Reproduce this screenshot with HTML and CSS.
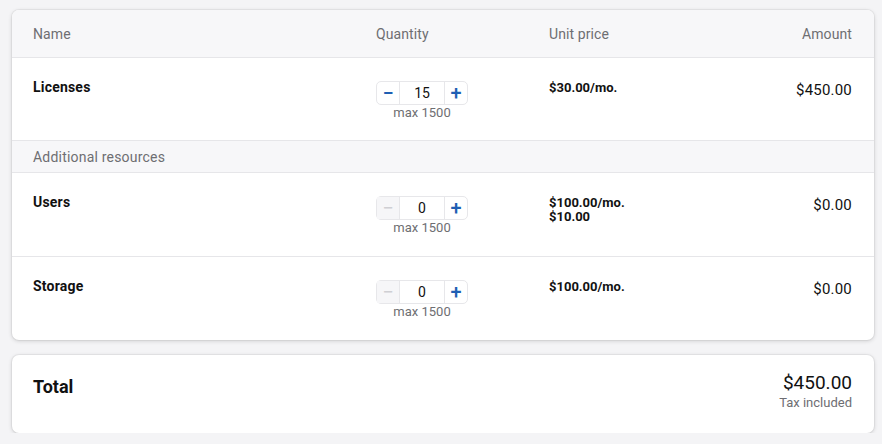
FILE: index.html
```html
<!DOCTYPE html>
<html>
<head>
<meta charset="utf-8">
<link rel="stylesheet" href="styles.css">
</head>
<body>
<div class="page">
  <div class="card">
    <div class="row head">
      <div>Name</div>
      <div>Quantity</div>
      <div>Unit price</div>
      <div class="right">Amount</div>
    </div>
    <div class="row item">
      <div class="name">Licenses</div>
      <div class="qty">
        <div class="stepper">
          <span class="btn">−</span><span class="val">15</span><span class="btn">+</span>
        </div>
        <div class="max">max 1500</div>
      </div>
      <div class="price">$30.00/mo.</div>
      <div class="amount">$450.00</div>
    </div>
    <div class="section">Additional resources</div>
    <div class="row item tall">
      <div class="name">Users</div>
      <div class="qty">
        <div class="stepper">
          <span class="btn off">−</span><span class="val">0</span><span class="btn">+</span>
        </div>
        <div class="max">max 1500</div>
      </div>
      <div class="price">$100.00/mo.<br>$10.00</div>
      <div class="amount">$0.00</div>
    </div>
    <div class="row item last">
      <div class="name">Storage</div>
      <div class="qty">
        <div class="stepper">
          <span class="btn off">−</span><span class="val">0</span><span class="btn">+</span>
        </div>
        <div class="max">max 1500</div>
      </div>
      <div class="price">$100.00/mo.</div>
      <div class="amount">$0.00</div>
    </div>
  </div>
  <div class="card total">
    <div class="total-label">Total</div>
    <div class="total-right">
      <div class="total-amount">$450.00</div>
      <div class="tax">Tax included</div>
    </div>
  </div>
</div>
</body>
</html>
```

FILE: styles.css
```css
html, body {
  margin: 0;
  padding: 0;
  background: #f4f4f6;
}
body {
  font-family: "Roboto", "Liberation Sans", sans-serif;
  color: #111;
}
.page {
  padding: 10px 8px 0 12px;
  display: flex;
  flex-direction: column;
  gap: 15px;
}
.card {
  background: #fff;
  border-radius: 7px;
  box-shadow: 0 1px 4px rgba(0,0,0,0.16), 0 0 0 1px rgba(0,0,0,0.04);
  overflow: hidden;
}
.row {
  display: grid;
  grid-template-columns: 343px 173px 1fr auto;
  padding: 0 22px 0 21px;
}
.head {
  height: 47px;
  align-items: center;
  background: #f7f7f9;
  border-bottom: 1px solid #e6e6e9;
  font-size: 14px;
  color: #6e6e72;
  letter-spacing: 0.1px;
}
.right { text-align: right; }
.item {
  height: 83px;
  box-sizing: border-box;
  padding-top: 21px;
  border-bottom: 1px solid #e6e6e9;
  align-items: start;
}
.item.tall { height: 84px; }
.item.last { border-bottom: none; height: 83px; }
.name {
  font-weight: 700;
  font-size: 14px;
  line-height: 16px;
  letter-spacing: 0.2px;
}
.qty {
  display: flex;
  flex-direction: column;
  align-items: flex-start;
  margin-top: 2px;
}
.stepper {
  display: flex;
  width: 92px;
  height: 24px;
  box-sizing: border-box;
  border: 1px solid #e7e7ea;
  border-radius: 5px;
}
.btn {
  width: 22px;
  display: flex;
  align-items: center;
  justify-content: center;
  color: #1f5fb3;
  font-size: 20px;
  font-weight: 500;
  line-height: 1;
}
.btn.off { color: #cfcfd3; background: #f6f6f8; font-weight: 400; }
.btn:first-child { border-right: 1px solid #e7e7ea; }
.btn:last-child { border-left: 1px solid #e7e7ea; }
.val {
  flex: 1;
  text-align: center;
  font-size: 14px;
  line-height: 22px;
}
.max {
  width: 92px;
  text-align: center;
  font-size: 13px;
  color: #6e6e72;
  line-height: 16px;
}
.price {
  font-weight: 700;
  font-size: 13px;
  line-height: 14px;
  padding-top: 2px;
}
.amount {
  font-size: 15px;
  text-align: right;
  padding-top: 2px;
  letter-spacing: 0.2px;
}
.section {
  height: 32px;
  box-sizing: border-box;
  display: flex;
  align-items: center;
  padding-left: 21px;
  background: #f7f7f9;
  border-bottom: 1px solid #e6e6e9;
  font-size: 14px;
  color: #6e6e72;
  letter-spacing: 0.2px;
}
.total {
  height: 78px;
  display: flex;
  justify-content: space-between;
  padding: 0 22px 0 21px;
  align-items: flex-start;
}
.total-label {
  font-weight: 700;
  font-size: 18px;
  padding-top: 21px;
}
.total-right {
  text-align: right;
  padding-top: 17px;
}
.total-amount { font-size: 19px; line-height: 22px; }
.tax { font-size: 13px; color: #6e6e72; line-height: 17px; }
```
